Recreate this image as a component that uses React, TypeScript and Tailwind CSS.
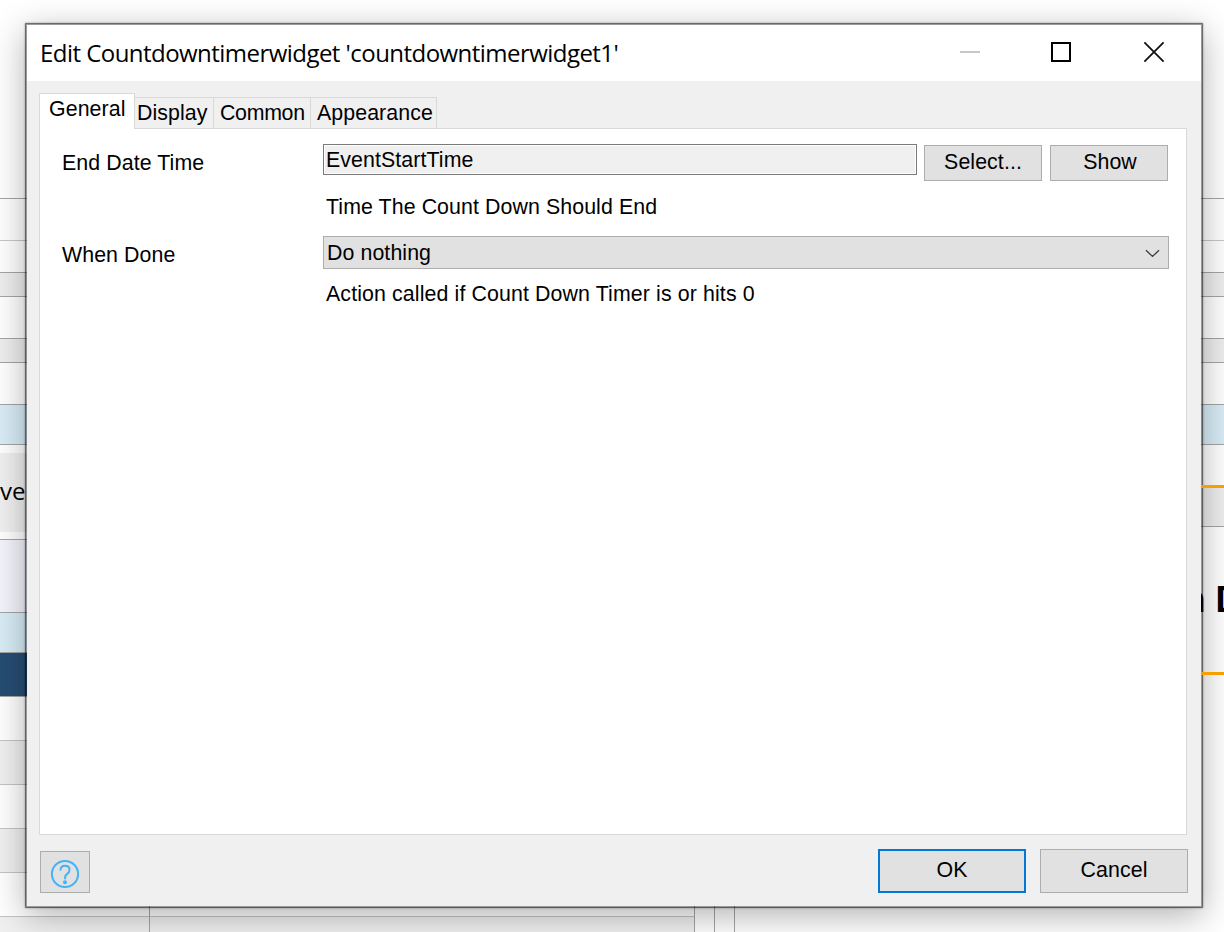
import type { ReactNode } from "react";

const leftRows = [
  "h-[199px] border-[#a5a5a5] bg-white",
  "h-[42px] border-[#c8c8c8] bg-white",
  "h-[32px] border-[#a5a5a5] bg-white",
  "h-[24px] border-[#a5a5a5] bg-[#eeeeee]",
  "h-[42px] border-[#a5a5a5] bg-white",
  "h-[24px] border-[#a5a5a5] bg-[#eeeeee]",
  "h-[42px] border-[#a5a5a5] bg-white",
  "h-[40px] border-[#a5a5a5] bg-[#d9edf7]",
];

const lowerLeftRows = [
  "h-[73px] border-[#a5a5a5] bg-[#f4f4fd]",
  "h-[40px] border-[#a5a5a5] bg-[#d9edf7]",
  "h-[44px] border-[#a5a5a5] bg-[#264d74]",
  "h-[44px] border-[#c4c4c4] bg-white",
  "h-[44px] border-[#c4c4c4] bg-[#f0f0f0]",
  "h-[44px] border-[#c4c4c4] bg-white",
  "h-[44px] border-[#c4c4c4] bg-[#f0f0f0]",
];

const lastRows = [
  "h-[44px] border-[#c4c4c4] bg-white",
  "h-[44px] border-[#c4c4c4] bg-[#f0f0f0]",
];

function Rows({ rows }: { rows: string[] }) {
  return (
    <>
      {rows.map((row, i) => (
        <div key={i} className={`shrink-0 border-b ${row}`} />
      ))}
    </>
  );
}

function Backdrop() {
  return (
    <div className="flex h-[932px] w-[1224px] overflow-hidden">
      <div className="flex w-[695px] flex-col">
        <Rows rows={leftRows} />
        <div className="h-[95px] shrink-0 border-b border-[#a5a5a5] bg-white pt-2">
          <div className="h-[79px] bg-[#f0f0f0] pt-[18px] font-['Open_Sans',sans-serif] text-[24px] leading-[40px] text-black">
            <span>ver</span>
          </div>
        </div>
        <Rows rows={lowerLeftRows} />
        <div className="flex flex-1 border-r border-[#a5a5a5]">
          <div className="flex w-[150px] flex-col border-r border-[#a5a5a5]">
            <Rows rows={lastRows} />
          </div>
          <div className="flex flex-1 flex-col">
            <Rows rows={lastRows} />
          </div>
        </div>
      </div>
      <div className="flex flex-1 flex-col">
        <Rows rows={leftRows} />
        <div className="h-[40px]" />
        <div className="relative z-20 ml-[506px] h-[3px] bg-[#f5a000]" />
        <div className="h-[39px] border-b border-[#a5a5a5] bg-[#eeeeee]" />
        <div className="flex h-[145px] justify-end overflow-hidden pt-[53px] font-['Liberation_Sans',sans-serif] text-[36px] font-bold leading-[40px] text-black">
          <span className="-mr-[17.5px] whitespace-nowrap">n D</span>
        </div>
        <div className="relative z-20 ml-[506px] h-[3px] bg-[#f5a000]" />
        <div className="flex flex-1">
          <div className="w-[20px] border-r border-[#a5a5a5]" />
          <div className="w-[20px] border-r border-[#a5a5a5]" />
        </div>
      </div>
    </div>
  );
}

function TitleBar() {
  return (
    <div className="flex h-[56px] items-center bg-white pl-[13px]">
      <h1 className="font-['Open_Sans','Noto_Sans',sans-serif] text-[24px] leading-[32px] tracking-[-0.54px] whitespace-nowrap">
        Edit Countdowntimerwidget 'countdowntimerwidget1'
      </h1>
      <div className="ml-auto flex h-[54px] items-center self-start pr-[36px]">
        <svg width="22" height="22" viewBox="0 0 22 22" className="mr-[69px]">
          <path d="M1 11h20" stroke="#c8c8c8" strokeWidth="2" />
        </svg>
        <svg width="22" height="22" viewBox="0 0 22 22" className="mr-[71px]">
          <rect x="2" y="2" width="18" height="18" fill="none" stroke="#000" strokeWidth="2" />
        </svg>
        <svg width="22" height="22" viewBox="0 0 22 22">
          <path d="M1.4 1.4l19.2 19.2M20.6 1.4L1.4 20.6" stroke="#111" strokeWidth="1.8" />
        </svg>
      </div>
    </div>
  );
}

function Button({ className, children }: { className: string; children: ReactNode }) {
  return (
    <button className={`flex shrink-0 justify-center bg-[#e1e1e1] ${className}`}>{children}</button>
  );
}

export default function App() {
  return (
    <div className="relative h-[932px] w-[1224px] overflow-hidden bg-white">
      <Backdrop />
      <div className="absolute top-[23px] left-[25px] flex h-[885px] w-[1178px] flex-col border-2 border-black/40 bg-[#f0f0f0] bg-clip-padding font-['Liberation_Sans',Arial,sans-serif] text-[21.33px] leading-[24px] tracking-[0.09px] text-black shadow-[0_0_2px_rgba(0,0,0,0.35),0_8px_32px_rgba(0,0,0,0.3)]">
        <TitleBar />
        <div className="flex h-[47px] shrink-0 items-end pl-[12px]">
          <div className="relative z-10 -mb-px h-[36px] w-[96px] border border-b-0 border-[#d9d9d9] bg-white pt-[3px] pl-[9px]">
            General
          </div>
          <div className="h-[31px] w-[79px] border-t border-r border-[#d9d9d9] pt-[3px] pl-[2px]">
            Display
          </div>
          <div className="h-[31px] w-[97px] border-t border-r border-[#d9d9d9] pt-[3px] pl-[6px] tracking-[-0.3px]">
            Common
          </div>
          <div className="h-[31px] w-[126px] border-t border-r border-[#d9d9d9] pt-[3px] pl-[6px]">
            Appearance
          </div>
        </div>
        <div className="mx-[12px] mr-[14px] h-[707px] shrink-0 border border-[#d9d9d9] bg-white pt-[15px] pr-[17px] pl-[22px]">
          <div className="flex h-[92px]">
            <label className="w-[261px] pt-[7px]">End Date Time</label>
            <div className="flex-1">
              <div className="flex h-[37px] gap-2">
                <div className="-mr-px h-[31px] w-[594px] border border-[#7a7a7a] bg-[#f0f0f0] pt-[3px] pl-[2px] shadow-[inset_0_0_0_1px_#fff]">
                  EventStartTime
                </div>
                <Button className="mt-px h-[36px] w-[118px] border border-[#adadad] pt-[4px]">
                  Select...
                </Button>
                <Button className="mt-px h-[36px] w-[118px] border border-[#adadad] pt-[4px] pl-[2px]">
                  Show
                </Button>
              </div>
              <p className="pt-[14px] pl-[3px]">Time The Count Down Should End</p>
            </div>
          </div>
          <div className="flex">
            <label className="w-[261px] pt-[7px]">When Done</label>
            <div className="flex-1">
              <div className="flex h-[33px] w-[846px] justify-between border border-[#adadad] bg-[#e1e1e1] pt-[4px] pr-[8px] pl-[3px]">
                <span>Do nothing</span>
                <svg width="15" height="24" viewBox="0 0 15 24">
                  <path d="M1 9.2l6.5 6.2 6.5-6.2" fill="none" stroke="#404040" strokeWidth="1.4" />
                </svg>
              </div>
              <p className="pt-[13px] pl-[3px] tracking-[0.12px]">Action called if Count Down Timer is or hits 0</p>
            </div>
          </div>
        </div>
        <div className="flex pt-[14px] pl-[13px]">
          <Button className="mt-[2px] h-[42px] w-[50px] items-center border border-[#adadad]">
            <svg width="30" height="30" viewBox="0 0 30 30" className="mt-[4px]" fill="none" stroke="#43b2f6">
              <circle cx="15" cy="15" r="13.1" strokeWidth="2" />
              <path d="M10.5 11.4c0-2.9 1.9-4.6 4.5-4.6s4.5 1.7 4.5 4.2c0 2-1 2.9-2.5 4.1-1.3 1-1.9 1.7-1.9 3.2v1.9" strokeWidth="2" />
              <circle cx="15" cy="23.2" r="2" fill="#43b2f6" stroke="none" />
            </svg>
          </Button>
          <Button className="ml-[788px] h-[44px] w-[148px] border-2 border-[#0078d7] pt-[7px]">OK</Button>
          <Button className="ml-[14px] h-[44px] w-[148px] border border-[#adadad] pt-[8px]">Cancel</Button>
        </div>
      </div>
    </div>
  );
}
